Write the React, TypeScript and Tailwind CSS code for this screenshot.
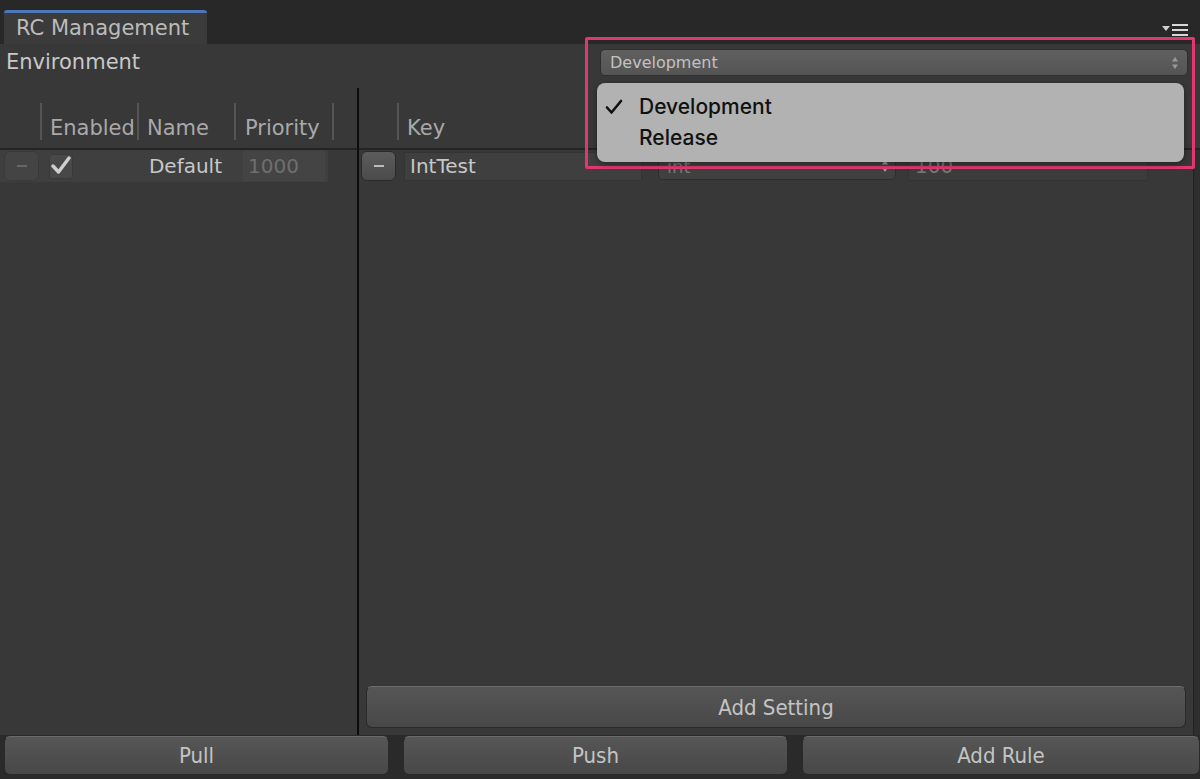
import React from "react";

const ui = { fontFamily: '"DejaVu Sans", "Noto Sans", sans-serif' };
const cond = { fontFamily: '"DejaVu Sans Condensed", "DejaVu Sans", sans-serif', fontStretch: "condensed" as const };
const mac = { fontFamily: 'Inter, "Liberation Sans", sans-serif' };

const Updown = () => (
  <svg width="8" height="14" viewBox="0 0 8 14" className="shrink-0">
    <path d="M4 1 L7 5.5 H1 Z" fill="#9a9a9a" />
    <path d="M4 13 L7 8.5 H1 Z" fill="#9a9a9a" />
  </svg>
);

const MinusBtn = ({ dim }: { dim?: boolean }) => (
  <div
    className={`flex items-center justify-center w-[35px] h-[30px] rounded-md border ${
      dim ? "bg-[#444] border-[#3a3a3a]" : "bg-gradient-to-b from-[#5c5c5c] to-[#4b4b4b] border-[#2a2a2a]"
    }`}
  >
    <span className={`block w-[10px] h-[2px] ${dim ? "bg-[#666]" : "bg-[#bdbdbd]"}`} />
  </div>
);

const HeadSep = () => <span className="block w-[2px] h-[37px] bg-[#555] self-end mb-[8px]" />;

const BigButton = ({ label, className }: { label: string; className: string }) => (
  <div
    className={`flex items-center justify-center rounded-md border border-[#2a2a2a] border-t-[#6a6a6a] bg-gradient-to-b from-[#565656] to-[#484848] text-[#c4c4c4] text-[22px] ${className}`}
    style={cond}
  >
    {label}
  </div>
);

export default function App() {
  return (
    <div className="w-[1200px] h-[779px] bg-[#282828] overflow-hidden relative flex flex-col" style={ui}>
      {/* tab strip */}
      <div className="h-[44px] shrink-0 flex items-end pl-[4px] relative">
        <div className="w-[203px] h-[34px] bg-[#3b3b3b] border-t-[3px] border-[#4a78b8] rounded-t-[3px] flex items-center pl-[12px] text-[21px] text-[#bcbcbc]">
          RC Management
        </div>
        <div className="absolute right-[12px] top-[24px] flex items-start gap-[2px]">
          <svg width="8" height="6" viewBox="0 0 8 6" className="mt-[2px]">
            <path d="M0 0 H8 L4 5 Z" fill="#cfcfcf" />
          </svg>
          <div className="flex flex-col gap-[3px]">
            <span className="block w-[16px] h-[2px] bg-[#d8d8d8]" />
            <span className="block w-[16px] h-[2px] bg-[#d8d8d8]" />
            <span className="block w-[16px] h-[2px] bg-[#d8d8d8]" />
          </div>
        </div>
      </div>

      {/* main panel */}
      <div className="flex-1 flex flex-col bg-[#383838] min-h-0">
        {/* environment row */}
        <div className="h-[44px] shrink-0 flex items-center justify-between pl-[6px] pr-[12px]">
          <span className="text-[21px] text-[#c8c8c8] -mt-[6px]">Environment</span>
          <div className="w-[588px] h-[27px] -mt-[7px] rounded-[5px] bg-gradient-to-b from-[#606060] to-[#545454] border border-[#2e2e2e] flex items-center justify-between pl-[9px] pr-[8px] text-[16px] text-[#c2c2c2]">
            <span>Development</span>
            <Updown />
          </div>
        </div>

        {/* tables */}
        <div className="flex-1 flex min-h-0">
          {/* rules */}
          <div className="w-[357px] shrink-0 flex flex-col">
            <div className="h-[62px] flex items-end border-b-2 border-[#242424] text-[21px] text-[#a9a9a9]">
              <div className="w-[40px]" />
              <HeadSep />
              <div className="w-[95px] pl-[8px] pb-[4px]">Enabled</div>
              <HeadSep />
              <div className="w-[95px] pl-[8px] pb-[4px]">Name</div>
              <HeadSep />
              <div className="w-[96px] pl-[9px] pb-[4px]">Priority</div>
              <HeadSep />
            </div>
            <div className="h-[32px] flex items-center bg-[#3f3f3f] w-[328px]">
              <div className="pl-[4px]">
                <MinusBtn dim />
              </div>
              <div className="ml-[10px] w-[24px] h-[25px] rounded-[3px] bg-[#484848] border border-[#3a3a3a] flex items-center justify-center">
                <svg width="22" height="20" viewBox="0 0 22 20">
                  <path d="M3 10 L8.5 16 L19 2" fill="none" stroke="#cfcfcf" strokeWidth="3.4" strokeLinecap="round" strokeLinejoin="round" />
                </svg>
              </div>
              <div className="w-[151px] text-right text-[20px] text-[#c8c8c8] pr-[2px]">Default</div>
              <div className="ml-[19px] w-[82px] h-[30px] bg-[#444] flex items-center pl-[5px] text-[20px] text-[#6f6f6f]">1000</div>
            </div>
          </div>

          <div className="w-[2px] bg-[#0c0c0c] shrink-0" />

          {/* settings */}
          <div className="flex-1 flex flex-col min-w-0 relative">
            <div className="h-[62px] flex items-end border-b-2 border-[#242424] text-[21px] text-[#a9a9a9]">
              <div className="w-[38px]" />
              <HeadSep />
              <div className="pl-[8px] pb-[4px]">Key</div>
            </div>
            <div className="h-[32px] flex items-center gap-[8px] pl-[2px]">
              <MinusBtn />
              <div className="w-[238px] h-[29px] bg-[#3f3f3f] border border-[#333] flex items-center pl-[5px] text-[20px] text-[#c8c8c8]">IntTest</div>
              <div className="ml-[8px] w-[238px] h-[28px] rounded-[5px] bg-[#404040] border border-[#2e2e2e] flex items-center justify-between pl-[8px] pr-[6px] text-[18px] text-[#777]">
                <span>int</span>
                <Updown />
              </div>
              <div className="ml-[4px] w-[240px] h-[29px] bg-[#3c3c3c] border border-[#333] flex items-center pl-[6px] text-[20px] text-[#777]">100</div>
            </div>
            <div className="flex-1" />
            <div className="pl-[7px] pr-[14px] pb-[7px]">
              <BigButton label="Add Setting" className="h-[42px]" />
            </div>
            <div className="absolute right-0 top-[62px] bottom-0 w-[7px] bg-[#2e2e2e] border-l border-[#222]" />
          </div>
        </div>

        {/* bottom buttons */}
        <div className="h-[44px] shrink-0 flex items-start pt-[1px] pl-[4px] gap-[14px] bg-[#2a2a2a]">
          <BigButton label="Pull" className="w-[385px] h-[39px]" />
          <BigButton label="Push" className="w-[385px] h-[39px]" />
          <BigButton label="Add Rule" className="w-[398px] h-[39px] shrink-0" />
        </div>
      </div>

      {/* highlight and popup overlays */}
      <div className="absolute left-[585px] top-[37px] w-[610px] h-[132px] border-[3px] border-[#e0386e] rounded-[2px] pointer-events-none" />
      <div
        className="absolute left-[597px] top-[83px] w-[587px] h-[79px] rounded-[8px] bg-[#b2b2b2] shadow-[0_2px_6px_rgba(0,0,0,0.4)] flex flex-col justify-center text-[21px] font-medium text-[#111]"
        style={mac}
      >
        <div className="flex items-center h-[31px]">
          <span className="w-[42px] pl-[8px] flex items-center">
            <svg width="18" height="16" viewBox="0 0 18 16">
              <path d="M2 8.5 L6.5 13.5 L16 2" fill="none" stroke="#111" strokeWidth="2.6" strokeLinecap="round" strokeLinejoin="round" />
            </svg>
          </span>
          <span>Development</span>
        </div>
        <div className="flex items-center h-[31px]">
          <span className="w-[42px]" />
          <span>Release</span>
        </div>
      </div>
    </div>
  );
}
